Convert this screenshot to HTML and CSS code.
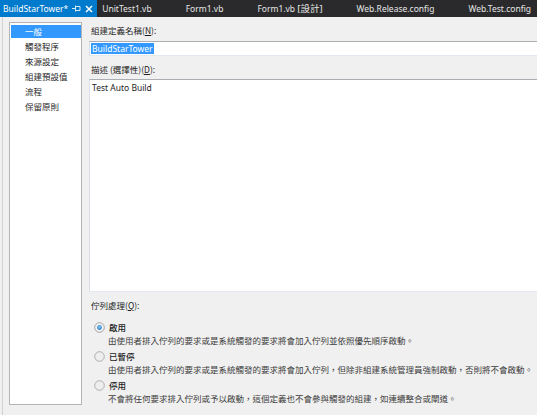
FILE: index.html
```html
<!DOCTYPE html>
<html>
<head>
<meta charset="utf-8">
<link rel="stylesheet" href="styles.css">
</head>
<body>
<div class="tabbar">
  <div class="tab active">
    <span class="tab-text">BuildStarTower*</span>
    <svg class="pin" width="9" height="9" viewBox="0 0 9 9"><path d="M0 4.5H3M3.5 1.5V7.5M3.5 2.5H8V6.5H3.5" fill="none" stroke="#d6ebfa" stroke-width="1"/></svg>
    <svg class="close" width="8" height="8" viewBox="0 0 8 8"><path d="M1 1L7 7M7 1L1 7" stroke="#ffffff" stroke-width="1.5"/></svg>
  </div>
  <div class="tab"><span class="tab-text">UnitTest1.vb</span></div>
  <div class="tab"><span class="tab-text">Form1.vb</span></div>
  <div class="tab"><span class="tab-text">Form1.vb <span class="cjk">[設計]</span></span></div>
  <div class="tab"><span class="tab-text">Web.Release.config</span></div>
  <div class="tab"><span class="tab-text">Web.Test.config</span></div>
</div>
<div class="body">
  <div class="frame">
    <nav class="sidenav">
      <div class="nav-item selected">一般</div>
      <div class="nav-item">觸發程序</div>
      <div class="nav-item">來源設定</div>
      <div class="nav-item">組建預設值</div>
      <div class="nav-item">流程</div>
      <div class="nav-item">保留原則</div>
    </nav>
    <main class="content">
      <div class="label first">組建定義名稱(<u>N</u>):</div>
      <div class="input"><span class="sel">BuildStarTower</span></div>
      <div class="label second">描述 (選擇性)(<u>D</u>):</div>
      <div class="textarea">Test Auto Build</div>
      <div class="label third">佇列處理(<u>Q</u>):</div>
      <div class="options">
        <div class="option">
          <div class="opt-head">
            <svg class="radio" width="11" height="11" viewBox="0 0 11 11"><defs><radialGradient id="rg1" cx="0.5" cy="0.4" r="0.6"><stop offset="0" stop-color="#8fd3ff"/><stop offset="1" stop-color="#1c6fc1"/></radialGradient></defs><circle cx="5.5" cy="5.5" r="4.8" fill="#f4f4f4" stroke="#9a9a9a" stroke-width="0.9"/><circle cx="5.5" cy="5.5" r="2.4" fill="url(#rg1)"/></svg>
            <span class="opt-title">啟用</span>
          </div>
          <div class="opt-desc">由使用者排入佇列的要求或是系統觸發的要求將會加入佇列並依照優先順序啟動。</div>
        </div>
        <div class="option">
          <div class="opt-head">
            <svg class="radio" width="11" height="11" viewBox="0 0 11 11"><circle cx="5.5" cy="5.5" r="4.8" fill="#eeeeee" stroke="#a8a8a8" stroke-width="0.9"/></svg>
            <span class="opt-title">已暫停</span>
          </div>
          <div class="opt-desc">由使用者排入佇列的要求或是系統觸發的要求將會加入佇列，但除非組建系統管理員強制啟動，否則將不會啟動。</div>
        </div>
        <div class="option">
          <div class="opt-head">
            <svg class="radio" width="11" height="11" viewBox="0 0 11 11"><circle cx="5.5" cy="5.5" r="4.8" fill="#eeeeee" stroke="#a8a8a8" stroke-width="0.9"/></svg>
            <span class="opt-title">停用</span>
          </div>
          <div class="opt-desc">不會將任何要求排入佇列或予以啟動，這個定義也不會參與觸發的組建，如連續整合或閘道。</div>
        </div>
      </div>
    </main>
  </div>
</div>
</body>
</html>
```

FILE: styles.css
```css
html, body {
  margin: 0;
  padding: 0;
}
body {
  width: 537px;
  height: 415px;
  overflow: hidden;
  background: #f0f0f0;
  font-family: "Noto Sans CJK TC", "Noto Sans", sans-serif;
  font-size: 8.5px;
  color: #1e1e1e;
}
.tabbar {
  height: 17px;
  background: #2a2a2c;
  display: flex;
  align-items: stretch;
  white-space: nowrap;
  overflow: hidden;
  font-family: "Noto Sans", "Noto Sans CJK TC", sans-serif;
  font-size: 8.5px;
  color: #e6e6e6;
}
.tab {
  display: flex;
  align-items: center;
  padding: 0 29px 0 5px;
  line-height: 17px;
}
.tab .cjk {
  font-size: 9.5px;
}
.tab.active {
  background: #007acc;
  color: #ffffff;
  padding: 0 4px 0 3px;
}
.pin {
  margin-left: 4px;
}
.close {
  margin-left: 4px;
}
.body {
  height: 398px;
  padding-left: 2px;
  box-sizing: border-box;
}
.frame {
  height: 100%;
  border-left: 1px solid #d2d2d2;
  display: flex;
  padding: 5px 0 0 6px;
  box-sizing: border-box;
}
.sidenav {
  width: 73px;
  height: 383px;
  box-sizing: border-box;
  background: #ffffff;
  border: 1px solid #b4b4b4;
  padding: 2px 0 0 1px;
  flex: none;
}
.nav-item {
  height: 13px;
  line-height: 13px;
  margin-bottom: 2px;
  padding-left: 14px;
  color: #1e1e1e;
}
.nav-item.selected {
  background: #3399ff;
  color: #ffffff;
}
.content {
  flex: 1;
  margin-left: 7px;
  min-width: 0;
}
.label {
  line-height: 12px;
  padding-left: 2px;
  color: #1e1e1e;
}
.label u {
  text-decoration: underline;
}
.label.first {
  margin-top: 2px;
}
.label.second {
  margin-top: 7px;
}
.label.third {
  margin-top: 7px;
}
.input {
  margin-top: 5px;
  height: 15px;
  box-sizing: border-box;
  background: #ffffff;
  border-top: 1px solid #abadb3;
  border-left: 1px solid #dbdfe6;
  border-bottom: 1px solid #e3e9ef;
  padding: 1px 0 0 1px;
  font-family: "Noto Sans", "Noto Sans CJK TC", sans-serif;
  font-size: 8.5px;
  line-height: 11px;
}
.sel {
  display: inline-block;
  background: #3399ff;
  color: #ffffff;
  padding: 0 1px;
  height: 11px;
}
.textarea {
  margin-top: 4px;
  height: 213px;
  box-sizing: border-box;
  background: #ffffff;
  border-top: 1px solid #abadb3;
  border-left: 1px solid #dbdfe6;
  border-bottom: 1px solid #e3e9ef;
  padding: 1px 0 0 2px;
  font-family: "Noto Sans", "Noto Sans CJK TC", sans-serif;
  font-size: 8.5px;
  line-height: 13px;
}
.options {
  margin-top: 10px;
  padding-left: 5px;
}
.option + .option {
  margin-top: 4px;
}
.opt-head {
  display: flex;
  align-items: center;
  height: 12px;
}
.radio {
  flex: none;
  margin-right: 4px;
}
.opt-title {
  line-height: 12px;
  color: #1e1e1e;
  font-weight: 500;
}
.opt-desc {
  margin-top: 1px;
  padding-left: 14px;
  line-height: 12px;
  color: #3c3c3c;
  white-space: nowrap;
}
```
